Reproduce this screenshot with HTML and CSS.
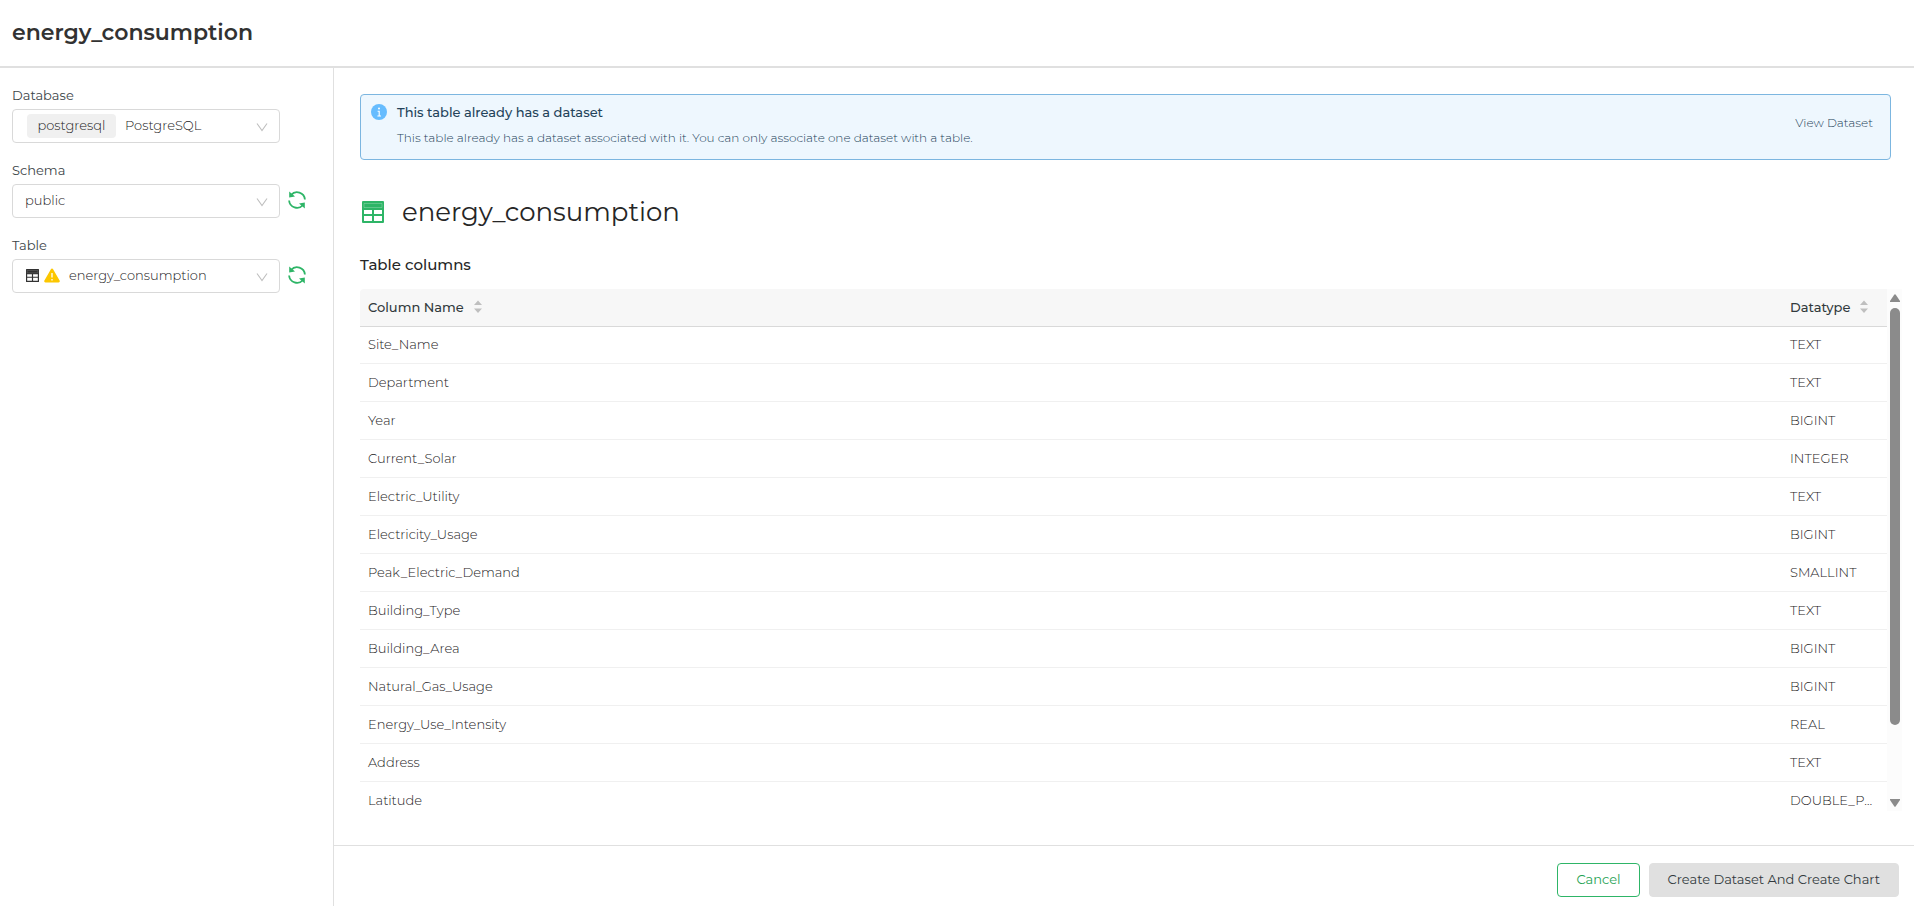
FILE: index.html
```html
<!DOCTYPE html>
<html lang="en">
<head>
<meta charset="utf-8">
<title>energy_consumption</title>
<link rel="stylesheet" href="styles.css">
</head>
<body>
<svg class="sprite" aria-hidden="true">
  <symbol id="chevron" viewBox="0 0 12 10"><path d="M1 1.5 6 8.5 11 1.5" fill="none" stroke="currentColor" stroke-width="1.1"/></symbol>
  <symbol id="refresh" viewBox="0 0 18 18"><path d="M3 4A7.900 7.900 0 0 1 16.900 8.500M15 14A7.900 7.900 0 0 1 1.100 9.500" fill="none" stroke="currentColor" stroke-width="1.800"/><path d="M1.200 .6v5.800l5.800-.8zM16.800 17.400v-5.800l-5.800.8z" fill="currentColor"/></symbol>
  <symbol id="grid" viewBox="0 0 22 22"><path fill="currentColor" fill-rule="evenodd" d="M1 0h20a1 1 0 0 1 1 1v20a1 1 0 0 1-1 1H1a1 1 0 0 1-1-1V1a1 1 0 0 1 1-1zM2 9v4h8V9zM12 9v4h8V9zM2 15v5h8v-5zM12 15v5h8v-5z"/><path d="M2 2.500h18v4H2z" fill="none" stroke="#fff" stroke-opacity=".4" stroke-width=".6"/></symbol>
  <symbol id="sorter" viewBox="0 0 8 14"><path d="M4 .5 8 5H0zM4 13 8 8.500H0z" fill="currentColor"/></symbol>
</svg>
<header class="header"><h1>energy_consumption</h1></header>
<div class="layout">
  <aside class="sidebar">
    <div class="field">
      <label for="database">Database</label>
      <div class="control">
        <div class="select-box">
          <select id="database" class="with-tag"><option>PostgreSQL</option></select>
          <span class="tag">postgresql</span>
          <svg class="chevron"><use href="#chevron"/></svg>
        </div>
      </div>
    </div>
    <div class="field">
      <label for="schema">Schema</label>
      <div class="control">
        <div class="select-box">
          <select id="schema"><option>public</option></select>
          <svg class="chevron"><use href="#chevron"/></svg>
        </div>
        <button class="refresh" type="button"><svg><use href="#refresh"/></svg></button>
      </div>
    </div>
    <div class="field">
      <label for="table">Table</label>
      <div class="control">
        <div class="select-box">
          <select id="table" class="with-icons"><option>energy_consumption</option></select>
          <span class="icons">
            <svg class="grid-small"><use href="#grid"/></svg>
            <svg class="warning" viewBox="0 0 16 15"><path d="M6.900 1.200a1.300 1.300 0 0 1 2.200 0l6.500 11.300a1.300 1.300 0 0 1-1.100 2H1.500a1.300 1.300 0 0 1-1.100-2z" fill="#fcc700"/><path d="M8 5v4.500M8 11v1.600" stroke="#fff" stroke-width="1.300"/></svg>
          </span>
          <svg class="chevron"><use href="#chevron"/></svg>
        </div>
        <button class="refresh" type="button"><svg><use href="#refresh"/></svg></button>
      </div>
    </div>
  </aside>
  <main class="main">
    <section class="alert">
      <svg class="info" viewBox="0 0 16 16"><circle cx="8" cy="8" r="8" fill="#66bcfe"/><circle cx="8" cy="4.600" r="1" fill="#fff"/><path d="M6.600 7.200H8.200V11.800M6.400 12H10" fill="none" stroke="#fff" stroke-width="1.100"/></svg>
      <div class="alert-text">
        <strong>This table already has a dataset</strong>
        <p>This table already has a dataset associated with it. You can only associate one dataset with a table.</p>
      </div>
      <a class="view" href="#">View Dataset</a>
    </section>
    <h2 class="table-title"><svg><use href="#grid"/></svg>energy_consumption</h2>
    <h3 class="subtitle">Table columns</h3>
    <div class="table-area">
      <div class="table-clip">
        <table>
          <thead><tr>
            <th><span class="head">Column Name<svg><use href="#sorter"/></svg></span></th>
            <th class="type"><span class="head">Datatype<svg><use href="#sorter"/></svg></span></th>
          </tr></thead>
          <tbody>
            <tr><td>Site_Name</td><td>TEXT</td></tr>
            <tr><td>Department</td><td>TEXT</td></tr>
            <tr><td>Year</td><td>BIGINT</td></tr>
            <tr><td>Current_Solar</td><td>INTEGER</td></tr>
            <tr><td>Electric_Utility</td><td>TEXT</td></tr>
            <tr><td>Electricity_Usage</td><td>BIGINT</td></tr>
            <tr><td>Peak_Electric_Demand</td><td>SMALLINT</td></tr>
            <tr><td>Building_Type</td><td>TEXT</td></tr>
            <tr><td>Building_Area</td><td>BIGINT</td></tr>
            <tr><td>Natural_Gas_Usage</td><td>BIGINT</td></tr>
            <tr><td>Energy_Use_Intensity</td><td>REAL</td></tr>
            <tr><td>Address</td><td>TEXT</td></tr>
            <tr><td>Latitude</td><td>DOUBLE_PRECISION</td></tr>
          </tbody>
        </table>
      </div>
      <div class="scrollbar">
        <svg viewBox="0 0 10 8"><path d="M4.200 .8a1 1 0 0 1 1.600 0L10 7v1H0V7z" fill="#8b8b8b"/></svg>
        <div class="track"><div class="thumb"></div></div>
        <svg viewBox="0 0 10 8"><path d="M4.200 7.200a1 1 0 0 0 1.600 0L10 1V0H0v1z" fill="#8b8b8b"/></svg>
      </div>
    </div>
    <footer class="footer">
      <button class="btn cancel" type="button">Cancel</button>
      <button class="btn create" type="button" disabled>Create Dataset And Create Chart</button>
    </footer>
  </main>
</div>
</body>
</html>
```
FILE: styles.css
```css
* { box-sizing: border-box; }
body {
  margin: 0;
  height: 100vh;
  display: flex;
  flex-direction: column;
  font: 300 13px/20px Montserrat, Inter, sans-serif;
  color: #1c2123;
  background: #fff;
}
h1, h2, h3, p { margin: 0; }
button, select { font: inherit; color: inherit; }
svg { display: block; flex: none; }
.sprite { position: absolute; width: 0; height: 0; }

.header { padding: 17px 12px 17px; border-bottom: 2px solid #e0e0e0; }
.header h1 { font-size: 22px; line-height: 32px; font-weight: 600; color: #323232; }
.layout { flex: 1; min-height: 0; display: flex; }

.sidebar { width: 334px; flex: none; padding: 17px 26px 0 12px; border-right: 1px solid #e0e0e0; }
.field { margin-bottom: 17px; }
.field label { display: block; line-height: 20px; margin-bottom: 4px; font-weight: 400; color: #3c4548; }
.control { display: flex; align-items: center; gap: 8px; }
.select-box { position: relative; width: 268px; }
select {
  display: block;
  width: 100%;
  height: 34px;
  padding: 0 32px 2px 12px;
  border: 1px solid #d9d9d9;
  border-radius: 4px;
  background: #fff;
  appearance: none;
}
select.with-tag { padding-left: 112px; }
select.with-icons { padding-left: 56px; }
.tag {
  position: absolute;
  left: 15px;
  top: 5px;
  width: 89px;
  height: 24px;
  line-height: 22px;
  border-radius: 4px;
  background: #f0f0f0;
  text-align: center;
  pointer-events: none;
}
.icons { position: absolute; left: 14px; top: 9px; display: flex; align-items: center; gap: 5px; }
.grid-small { width: 13px; height: 13px; color: #323232; }
.warning { width: 16px; height: 15px; }
.chevron { position: absolute; right: 12px; top: 13px; width: 12px; height: 10px; color: #bfbfbf; pointer-events: none; }
.refresh { padding: 0 0 2px; border: 0; background: none; color: #2eb567; }
.refresh svg { width: 18px; height: 18px; }

.main { flex: 1; min-width: 0; display: flex; flex-direction: column; }
.alert {
  display: flex;
  margin: 26px 23px 0 26px;
  padding: 7px 17px 11px 10px;
  border: 1px solid #7cb6e0;
  border-radius: 4px;
  background: #eef7fe;
}
.info { width: 16px; height: 16px; margin-top: 2px; }
.alert-text { flex: 1; margin-left: 10px; font-size: 12px; color: #24435a; }
.alert-text strong { display: block; font-size: 13px; font-weight: 500; color: #24435a; }
.alert-text p { line-height: 20px; margin-top: 6px; }
.view { align-self: center; padding-bottom: 4px; font-size: 12px; color: #24435a; text-decoration: none; }
.table-title {
  display: flex;
  align-items: center;
  gap: 18px;
  margin: 35px 28px 0;
  font-size: 26px;
  line-height: 34px;
  font-weight: 400;
  color: #262626;
}
.table-title svg { width: 22px; height: 22px; color: #2eb567; }
.subtitle { margin: 26px 26px 14px; font-size: 15px; line-height: 20px; font-weight: 500; color: #262626; }

.table-area { flex: 1; min-height: 0; display: flex; margin: 0 12px 34px 26px; }
.table-clip { flex: 1; min-width: 0; overflow: hidden; }
table { width: 100%; table-layout: fixed; border-collapse: separate; border-spacing: 0; }
th, td { height: 38px; padding: 0 8px 2px; text-align: left; border-bottom: 1px solid #f0f0f0; overflow: hidden; text-overflow: ellipsis; white-space: nowrap; }
tbody tr:first-child td { height: 37px; }
th { background: #f7f7f7; border-bottom-color: #d9d9d9; font-weight: 500; color: #323a3d; }
th:first-child { border-top-left-radius: 4px; }
th.type { width: 105px; }
.head { display: flex; align-items: center; gap: 10px; }
.head svg { width: 8px; height: 14px; color: #bfbfbf; }
.scrollbar { width: 15px; display: flex; flex-direction: column; align-items: center; gap: 6px; padding: 5px 0 4px; background: #fcfcfc; }
.scrollbar svg { width: 10px; height: 8px; }
.track { flex: 1; width: 10px; }
.thumb { height: 86%; border-radius: 5px; background: #8b8b8b; }

.footer { display: flex; justify-content: flex-end; gap: 9px; padding: 17px 15px 9px; border-top: 1px solid #e0e0e0; }
.btn { height: 34px; padding: 0 18px 2px; border: 1px solid #2eb567; border-radius: 4px; background: #fff; font-weight: 400; }
.cancel { color: #1fa355; }
.create { border-color: #e0e0e0; background: #e0e0e0; color: #323a3d; }
```
